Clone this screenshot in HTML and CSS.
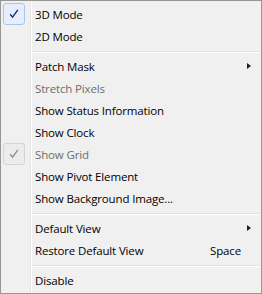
FILE: index.html
```html
<!DOCTYPE html>
<html>
<head>
<meta charset="utf-8">
<link rel="stylesheet" href="styles.css">
</head>
<body>
<div class="menu">
  <div class="item checked">
    <span class="check"><svg width="10" height="10" viewBox="0 0 10 10"><path d="M1.2 5.2 L3.6 8.2 L8.8 0.8" fill="none" stroke="currentColor" stroke-width="1.4"/></svg></span>
    <span class="label">3D Mode</span>
  </div>
  <div class="item"><span class="check"></span><span class="label">2D Mode</span></div>
  <div class="sep"></div>
  <div class="item"><span class="check"></span><span class="label">Patch Mask</span><span class="arrow"></span></div>
  <div class="item disabled"><span class="check"></span><span class="label">Stretch Pixels</span></div>
  <div class="item"><span class="check"></span><span class="label">Show Status Information</span></div>
  <div class="item"><span class="check"></span><span class="label">Show Clock</span></div>
  <div class="item disabled checked">
    <span class="check"><svg width="10" height="10" viewBox="0 0 10 10"><path d="M1.2 5.2 L3.6 8.2 L8.8 0.8" fill="none" stroke="currentColor" stroke-width="1.4"/></svg></span>
    <span class="label">Show Grid</span>
  </div>
  <div class="item"><span class="check"></span><span class="label">Show Pivot Element</span></div>
  <div class="item"><span class="check"></span><span class="label">Show Background Image...</span></div>
  <div class="sep"></div>
  <div class="item"><span class="check"></span><span class="label">Default View</span><span class="arrow"></span></div>
  <div class="item"><span class="check"></span><span class="label">Restore Default View</span><span class="shortcut">Space</span></div>
  <div class="sep"></div>
  <div class="item"><span class="check"></span><span class="label">Disable</span></div>
</div>
</body>
</html>
```
FILE: styles.css
```css
html, body {
  margin: 0;
  padding: 0;
  background: #ffffff;
}
.menu {
  box-sizing: border-box;
  width: 262px;
  height: 294px;
  border: 1px solid #979797;
  background: #f0f0f0;
  padding: 2px;
  font-family: "Open Sans", "Noto Sans", sans-serif;
  font-size: 11.5px;
  letter-spacing: -0.15px;
  color: #000;
  display: flex;
  flex-direction: column;
  background-image: linear-gradient(to right, transparent 29px, #e2e3e3 29px, #e2e3e3 30px, #ffffff 30px, #ffffff 31px, transparent 31px);
}
.item {
  height: 22px;
  display: flex;
  align-items: center;
}
.check {
  box-sizing: border-box;
  width: 22px;
  height: 22px;
  flex: none;
  display: flex;
  align-items: center;
  justify-content: center;
  border-radius: 3px;
  color: #1b2a78;
}
.checked .check {
  border: 1px solid #a8c6ec;
  background: #e5eefa;
}
.disabled.checked .check {
  border-color: #d4d4d4;
  background: #ececec;
  color: #8f8f8f;
}
.label {
  margin-left: 10px;
  flex: 1;
  white-space: nowrap;
}
.disabled .label {
  color: #6d6d6d;
}
.shortcut {
  margin-right: 18px;
}
.arrow {
  width: 0;
  height: 0;
  border-top: 3.5px solid transparent;
  border-bottom: 3.5px solid transparent;
  border-left: 4px solid #202020;
  margin-right: 8px;
}
.sep {
  height: 8px;
  box-sizing: border-box;
  margin-left: 29px;
  padding-top: 4px;
}
.sep::before {
  content: "";
  display: block;
  height: 1px;
  background: #e0e0e0;
  border-bottom: 1px solid #ffffff;
}
```
